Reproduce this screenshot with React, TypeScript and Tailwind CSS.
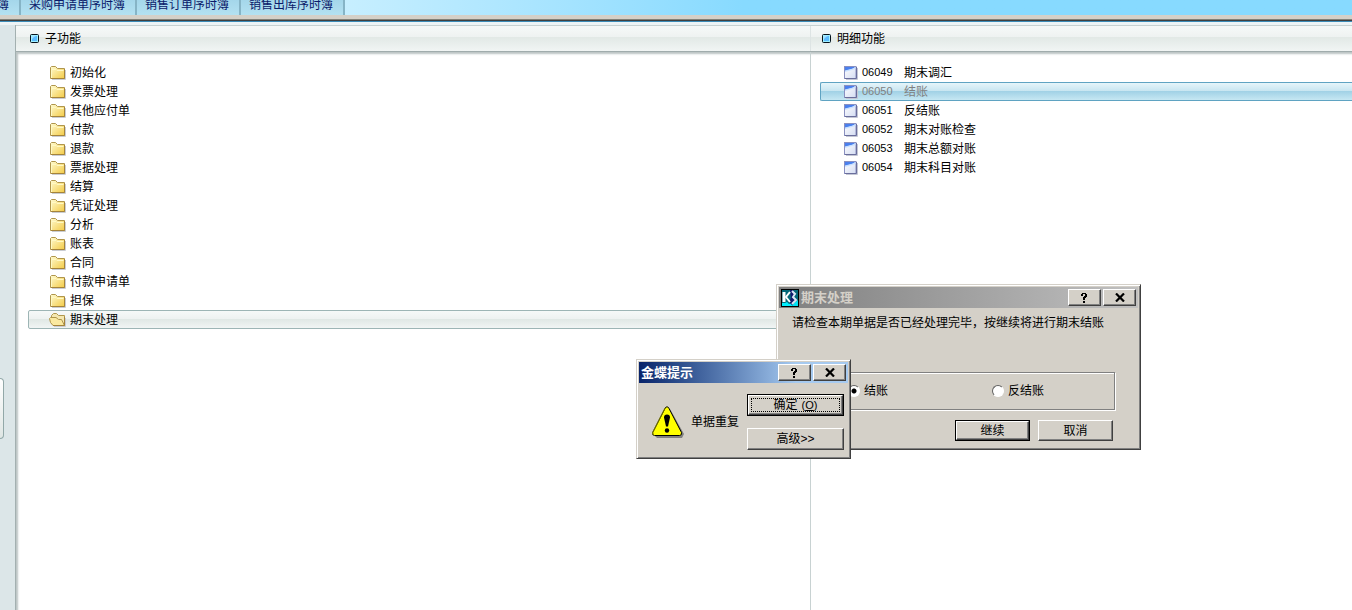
import React from "react";

const folders = [
  "初始化", "发票处理", "其他应付单", "付款", "退款", "票据处理", "结算",
  "凭证处理", "分析", "账表", "合同", "付款申请单", "担保", "期末处理",
];

const details = [
  ["06049", "期末调汇"],
  ["06050", "结账"],
  ["06051", "反结账"],
  ["06052", "期末对账检查"],
  ["06053", "期末总额对账"],
  ["06054", "期末科目对账"],
];

function Folder() {
  return (
    <svg width="16" height="14" viewBox="0 0 16 14" className="shrink-0">
      <defs>
        <linearGradient id="folder" x1="0" y1="0" x2="1" y2="1">
          <stop offset="0" stopColor="#fffbd0" />
          <stop offset="1" stopColor="#f3cb48" />
        </linearGradient>
      </defs>
      <path d="M2 13.5H15.5V4" fill="none" stroke="#c9ccd2" />
      <path d="M.5 12.5V1.5L1.500 .5H5.500L7.500 2.500H14.500V12.500Z" fill="url(#folder)" stroke="#b0964c" />
      <path d="M1.500 12V3.500H6L7 4.500H13.500" fill="none" stroke="#fff9c4" />
      <path d="M14.500 3V12.500H1" fill="none" stroke="#a5843a" />
    </svg>
  );
}

function OpenFolder() {
  return (
    <svg width="17" height="14" viewBox="0 0 17 14" className="-ml-px shrink-0">
      <path d="M5 13.500H16.500V5" fill="none" stroke="#c9ccd2" />
      <path d="M2.500 10V2.500L4.500 .5H7.500L9.500 2.500H15.500V12H4Z" fill="#f4e7b0" stroke="#b0964c" />
      <path d="M.5 5.500L1.500 4.500H7L9.500 6.500H12.500L15.500 12.500H4L1.500 9.500Z" fill="#fae9a0" stroke="#b0964c" />
      <path d="M15.500 4V12.500H4" fill="none" stroke="#a5843a" />
    </svg>
  );
}

function Page() {
  return (
    <svg width="14" height="14" viewBox="0 0 14 14" className="shrink-0">
      <defs>
        <linearGradient id="page" x1="0" y1="0" x2="1" y2="1">
          <stop offset="0" stopColor="#ffffff" />
          <stop offset="1" stopColor="#d4dcf2" />
        </linearGradient>
      </defs>
      <path d="M2 13.500H13.500V2" fill="none" stroke="#c3c6d4" />
      <rect x=".5" y=".5" width="11.500" height="12" fill="url(#page)" stroke="#8a90c0" />
      <path d="M1 1H11.500L8 3L1 5Z" fill="#4a80ee" />
      <path d="M1 4.500L9 2.500L11.500 1V3L8 4L1 6Z" fill="#c8e0ff" />
      <path d="M12.500 1V12.500H1" fill="none" stroke="#6a6e9c" />
    </svg>
  );
}

function Bullet() {
  return (
    <svg width="9" height="9" viewBox="0 0 9 9" className="shrink-0">
      <rect x=".5" y=".5" width="8" height="8" rx="1" fill="#9ff0ff" stroke="#06121c" />
      <rect x="2" y="2" width="5" height="5" fill="#5cbcff" />
      <path d="M2 5V2H6L4 3Z" fill="#a4dcff" />
    </svg>
  );
}

function Logo() {
  return (
    <svg width="18" height="18" viewBox="0 0 18 18" className="shrink-0">
      <rect x=".5" y=".5" width="17" height="17" fill="#006878" stroke="#000" />
      <path d="M1 14H4L6 13L8 15L11 14V17H1Z" fill="#00f0ff" />
      <path d="M13 14L17 11V17H11Z" fill="#00e0f4" />
      <path d="M9 1H12L15 5L13 8L16 11L11 16L8 13L10 9Z" fill="#10186c" />
      <path d="M3 3V13" stroke="#fff" strokeWidth="3" />
      <path d="M9 3L5 8L9 13" fill="none" stroke="#fff" strokeWidth="2" />
      <path d="M11 2L14 5L12 8L15 11L11 15" fill="none" stroke="#d8e8f4" strokeWidth="2" />
    </svg>
  );
}

function Warning() {
  return (
    <svg width="32" height="32" viewBox="0 0 32 32" className="shrink-0">
      <path d="M16 3L18 3L32 28L30 32H5L3 30Z" fill="#808080" />
      <path d="M13.500 1.500Q15 0 16.500 1.500L29.500 26.500Q30 29.500 27.500 29.500H2.500Q0 29.500 .7 26.500Z" fill="#ff0" stroke="#000" />
      <path d="M13 2L.7 26.500V28L2 29.500" fill="none" stroke="#808000" />
      <path d="M12 11.500Q12 8.500 15 8.500T18 11.500L16 20.500H14Z" fill="#000" />
      <circle cx="15" cy="24.500" r="2.200" fill="#000" />
    </svg>
  );
}

const raised =
  "flex items-center justify-center border border-t-white border-l-white border-r-[#404040] border-b-[#404040] bg-[#d4d0c8] shadow-[inset_-1px_-1px_0_#808080]";

function CaptionButtons() {
  return (
    <div className="flex gap-0.5">
      <button type="button" aria-label="帮助" className={`${raised} h-[17px] w-[33px]`}>
        <svg width="8" height="10" viewBox="0 0 8 10" shapeRendering="crispEdges">
          <path d="M0 1H1V0H5V1H6V4H5V5H4V7H2V4H3V3H4V1H2V3H0ZM2 8H4V10H2Z" fill="#000" />
        </svg>
      </button>
      <button type="button" aria-label="关闭" className={`${raised} h-[17px] w-[33px]`}>
        <svg width="10" height="9" viewBox="0 0 10 9">
          <path d="M1 .5L9 8.500M9 .5L1 8.500" stroke="#000" strokeWidth="2.200" />
        </svg>
      </button>
    </div>
  );
}

const frame =
  "absolute border border-t-[#d4d0c8] border-l-[#d4d0c8] border-r-[#404040] border-b-[#404040] bg-[#d4d0c8] p-0.5 shadow-[inset_1px_1px_0_#fff,inset_-1px_-1px_0_#808080]";

const radio =
  "size-3 appearance-none rounded-full border border-t-[#606060] border-l-[#606060] border-r-white border-b-white bg-white checked:bg-[radial-gradient(circle,#000_2px,#fff_3px)]";

export default function App() {
  return (
    <div className="relative flex h-screen flex-col overflow-hidden bg-white font-['Liberation_Sans','Noto_Sans_CJK_SC',sans-serif] text-xs text-black">
      <nav className="flex h-[15px] shrink-0 items-end overflow-hidden bg-linear-to-r from-[#c8efff] from-25% to-[#87daff] to-55% text-[#0a1a6a]">
        {["簿", "采购申请单序时簿", "销售订单序时簿", "销售出库序时簿"].map((t, i) => (
          <a
            key={t}
            href="#"
            className={`flex h-5 shrink-0 items-center justify-end border-r-2 border-[#86b4c6] bg-linear-to-b from-[#9fd3e8] to-[#b4e1f1] pr-2.5 leading-5 whitespace-nowrap ${
              i === 0 ? "w-[21px]" : i === 1 ? "w-[116px]" : "w-[104px]"
            }`}
          >
            {t}
          </a>
        ))}
      </nav>
      <div className="h-1 shrink-0 bg-[#d4d0c8]" />
      <div className="h-0.5 shrink-0 border-t border-[#808078] bg-[#404040]" />
      <div className="h-1 shrink-0 border-t border-[#3c8cb8] bg-[#edf4f6]" />
      <main className="flex min-h-0 flex-1">
        <aside className="w-[15px] shrink-0 bg-[#dce6e8] pt-[353px]">
          <div className="h-[61px] w-1 rounded-r-sm border border-l-0 border-[#92a8a8] bg-linear-to-b from-white to-[#dfe6e4]" />
        </aside>
        <div className="flex min-w-0 flex-1 flex-col border-l border-[#a3b0b0]">
          <div className="flex h-[27px] shrink-0 border-t border-b border-t-[#c8d2d2] border-b-[#a0acac] bg-[linear-gradient(#f6f9f8,#eef2f1_45%,#e2e9e6_46%,#f1f5f4)]">
            <h2 className="flex w-[795px] shrink-0 items-center gap-1.5 border-r border-[#dde4e4] pl-3.5">
              <Bullet />子功能
            </h2>
            <h2 className="flex items-center gap-1.5 pl-[11px]">
              <Bullet />明细功能
            </h2>
          </div>
          <div className="flex min-h-0 flex-1 shadow-[inset_3px_3px_2px_-1px_#bcc4c4]">
            <ul className="w-[795px] shrink-0 border-r border-[#c8d2d2] pt-[11px] pr-2 pl-3">
              {folders.map((name, i) => (
                <li
                  key={name}
                  className={`flex h-[19px] items-center gap-1 rounded-xs border pl-[21px] ${
                    i === 13
                      ? "border-[#9db5b5] bg-[linear-gradient(#f6f9f8,#eef2f1_45%,#dfe7e4_46%,#f1f5f4)]"
                      : "border-transparent"
                  }`}
                >
                  {i === 13 ? <OpenFolder /> : <Folder />}
                  {name}
                </li>
              ))}
            </ul>
            <ul className="min-w-0 flex-1 pt-[11px] pl-[9px]">
              {details.map(([id, name], i) => (
                <li
                  key={id}
                  className={`flex h-[19px] items-center rounded-l-xs border border-r-0 pl-[23px] ${
                    i === 1
                      ? "border-[#5fa3c2] bg-[linear-gradient(#e6f5fa,#c9e6f1_45%,#9fd0e5_46%,#c6e7f3)] text-[#808080]"
                      : "border-transparent"
                  }`}
                >
                  <Page />
                  <span className="ml-1 w-[42px] text-[11px]">{id}</span>
                  {name}
                </li>
              ))}
            </ul>
          </div>
        </div>
      </main>

      <section role="dialog" aria-label="期末处理" className={`${frame} top-[284px] left-[776px] w-[365px] pb-2`}>
        <header className="flex h-[21px] items-center gap-0.5 bg-linear-to-r from-[#808080] to-[#c0c0c0] pr-0.5 pl-0.5 font-bold text-[#d4d0c8]">
          <Logo />
          <h3 className="flex-1 text-[13px]">期末处理</h3>
          <CaptionButtons />
        </header>
        <p className="pt-[7px] pl-[13px] leading-4">请检查本期单据是否已经处理完毕，按继续将进行期末结账</p>
        <div className="mt-[41px] mr-[23px] ml-3.5 flex h-[38px] items-center border border-[#808080] pl-[54px] shadow-[1px_1px_0_#fff,inset_1px_1px_0_#fff]">
          <label className="flex w-36 items-center gap-1">
            <input type="radio" name="action" defaultChecked className={radio} />
            结账
          </label>
          <label className="flex items-center gap-1">
            <input type="radio" name="action" className={radio} />
            反结账
          </label>
        </div>
        <div className="mt-2.5 mr-[25px] flex justify-end gap-2">
          <button type="button" className="h-[21px] w-[75px] border border-black">
            <span className={`${raised} h-full`}>继续</span>
          </button>
          <button type="button" className={`${raised} h-[21px] w-[75px]`}>取消</button>
        </div>
      </section>

      <section role="dialog" aria-label="金蝶提示" className={`${frame} top-[359px] left-[636px] w-[215px]`}>
        <header className="flex h-[21px] items-center bg-linear-to-r from-[#0a246a] to-[#a6caf0] to-75% pr-0.5 pl-0.5 font-bold text-white">
          <h3 className="flex-1 text-[13px]">金蝶提示</h3>
          <CaptionButtons />
        </header>
        <div className="flex pt-[11px] pr-1 pb-1.5 pl-[13px]">
          <div className="flex flex-1 items-center gap-[7px]">
            <Warning />单据重复
          </div>
          <div className="flex flex-col gap-3">
            <button type="button" className="h-[22px] w-[97px] border border-black">
              <span className={`${raised} h-full p-0.5`}>
                <span className="flex h-full w-full items-center justify-center border border-dotted border-black">
                  确定<span className="ml-1 text-[11px]">(<u>O</u>)</span>
                </span>
              </span>
            </button>
            <button type="button" className={`${raised} h-[22px] w-[97px]`}>高级&gt;&gt;</button>
          </div>
        </div>
      </section>
    </div>
  );
}
